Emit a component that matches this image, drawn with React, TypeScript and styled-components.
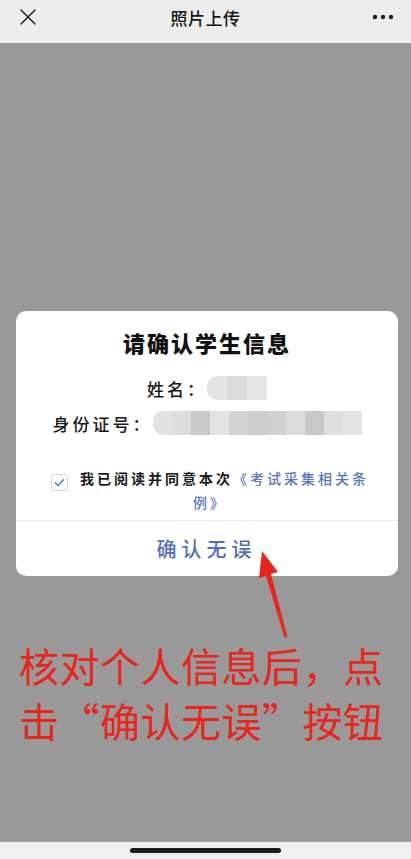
import React from "react";
import styled, { createGlobalStyle } from "styled-components";

const GlobalStyle = createGlobalStyle`
  html, body {
    margin: 0;
    padding: 0;
    background: #999999;
  }
  body {
    font-family: "Noto Sans CJK SC", "Noto Sans", sans-serif;
  }
`;

const Page = styled.div`
  position: relative;
  width: 411px;
  height: 859px;
  display: flex;
  flex-direction: column;
  overflow: hidden;
`;

const Header = styled.div`
  height: 43px;
  flex-shrink: 0;
  background: #ededed;
  display: flex;
  align-items: center;
  justify-content: space-between;
  padding: 0 16px 9px 16px;
  box-sizing: border-box;
`;

const HeaderTitle = styled.div`
  font-size: 17px;
  font-weight: 500;
  color: #141414;
  letter-spacing: 0.5px;
`;

const IconSlot = styled.div`
  width: 24px;
  height: 20px;
  display: flex;
  align-items: center;
  justify-content: center;
`;

const Overlay = styled.div`
  flex: 1;
  background: #999999;
  padding: 268px 13px 0 16px;
  display: flex;
  flex-direction: column;
`;

const Dialog = styled.div`
  background: #ffffff;
  border-radius: 10px;
  display: flex;
  flex-direction: column;
  align-items: center;
  overflow: hidden;
`;

const DialogTitle = styled.h2`
  margin: 16px 0 0;
  font-size: 22px;
  line-height: 30px;
  font-weight: 900;
  letter-spacing: 2px;
  color: #111111;
`;

const InfoRow = styled.div<{ $top: number }>`
  margin-top: ${(p) => p.$top}px;
  height: 28px;
  display: flex;
  align-items: center;
  justify-content: center;
`;

const Label = styled.span`
  font-size: 17px;
  letter-spacing: 3px;
  color: #1a1a1a;
  font-weight: 500;
`;

const Mosaic = styled.div`
  display: flex;
  height: 24px;
  border-radius: 10px 0 0 10px;
  overflow: hidden;
`;

const Tile = styled.div<{ $shade: string; $w: number }>`
  width: ${(p) => p.$w}px;
  height: 100%;
  background: ${(p) => p.$shade};
`;

const Agreement = styled.div`
  margin-top: 30px;
  padding: 0 28px 0 34px;
  box-sizing: border-box;
  width: 100%;
  text-align: center;
  font-size: 14px;
  line-height: 23px;
  letter-spacing: 3px;
  color: #1a1a1a;
  font-weight: 700;
`;

const Check = styled.span`
  display: inline-flex;
  align-items: center;
  justify-content: center;
  width: 15px;
  height: 15px;
  border: 1px solid #d6d6d6;
  border-radius: 3px;
  margin-right: 12px;
  vertical-align: -3px;
  background: #fafafa;
`;

const Link = styled.span`
  color: #5675c3;
  font-weight: 500;
`;

const Divider = styled.div`
  margin-top: 6px;
  width: 100%;
  height: 1px;
  background: #ececec;
`;

const ConfirmButton = styled.button`
  width: 100%;
  height: 55px;
  border: none;
  background: transparent;
  font-family: "Noto Sans CJK SC", sans-serif;
  font-size: 20px;
  font-weight: 500;
  letter-spacing: 5px;
  padding-left: 5px;
  color: #4f6fbf;
`;

const Hint = styled.p`
  margin: 62px 0 0 3px;
  font-size: 40px;
  line-height: 55px;
  letter-spacing: 0.5px;
  color: #e8261e;
  font-family: "Noto Sans CJK SC", sans-serif;
  font-weight: 400;
`;

const BottomBar = styled.div`
  height: 17px;
  flex-shrink: 0;
  background: #efefef;
  display: flex;
  justify-content: center;
  padding-top: 6px;
  box-sizing: border-box;
`;

const HomeIndicator = styled.div`
  width: 151px;
  height: 5px;
  border-radius: 3px;
  background: #1c1c1c;
`;

const ArrowLayer = styled.svg`
  position: absolute;
  left: 0;
  top: 0;
  pointer-events: none;
`;

const nameTiles = ["#e4e4e4", "#dcdcdc", "#e6e6e6"];
const idTiles = [
  "#e2e2e2",
  "#dddddd",
  "#c9c9c9",
  "#e3e3e3",
  "#d3d3d3",
  "#cdcdcd",
  "#d1d1d1",
  "#dcdcdc",
  "#c7c7c7",
  "#dedede",
  "#e4e4e4",
];

export default function App() {
  return (
    <>
      <GlobalStyle />
      <Page>
        <Header>
          <IconSlot>
            <svg width="18" height="18" viewBox="0 0 18 18">
              <path
                d="M2 2 L16 16 M16 2 L2 16"
                stroke="#222"
                strokeWidth="1.5"
                strokeLinecap="round"
              />
            </svg>
          </IconSlot>
          <HeaderTitle>照片上传</HeaderTitle>
          <IconSlot>
            <svg width="22" height="6" viewBox="0 0 22 6">
              <circle cx="3" cy="3" r="2.2" fill="#222" />
              <circle cx="11" cy="3" r="2.2" fill="#222" />
              <circle cx="19" cy="3" r="2.2" fill="#222" />
            </svg>
          </IconSlot>
        </Header>
        <Overlay>
          <Dialog>
            <DialogTitle>请确认学生信息</DialogTitle>
            <InfoRow $top={17}>
              <Label>姓名：</Label>
              <Mosaic>
                {nameTiles.map((c, i) => (
                  <Tile key={i} $shade={c} $w={20} />
                ))}
              </Mosaic>
            </InfoRow>
            <InfoRow $top={7}>
              <Label>身份证号：</Label>
              <Mosaic>
                {idTiles.map((c, i) => (
                  <Tile key={i} $shade={c} $w={19} />
                ))}
              </Mosaic>
            </InfoRow>
            <Agreement>
              <Check>
                <svg width="11" height="9" viewBox="0 0 11 9">
                  <path
                    d="M1 4.5 L4 7.5 L10 1.2"
                    fill="none"
                    stroke="#3f78c8"
                    strokeWidth="1.4"
                  />
                </svg>
              </Check>
              我已阅读并同意本次<Link>《考试采集相关条</Link>
              <br />
              <Link>例》</Link>
            </Agreement>
            <Divider />
            <ConfirmButton>确认无误</ConfirmButton>
          </Dialog>
          <Hint>
            核对个人信息后，点
            <br />
            击“确认无误”按钮
          </Hint>
        </Overlay>
        <BottomBar>
          <HomeIndicator />
        </BottomBar>
        <ArrowLayer width="411" height="859" viewBox="0 0 411 859">
          <polygon
            points="262,551 278,572 271,574 287.5,637 284.5,637.5 266,576 259,578"
            fill="#e8261e"
          />
        </ArrowLayer>
      </Page>
    </>
  );
}
